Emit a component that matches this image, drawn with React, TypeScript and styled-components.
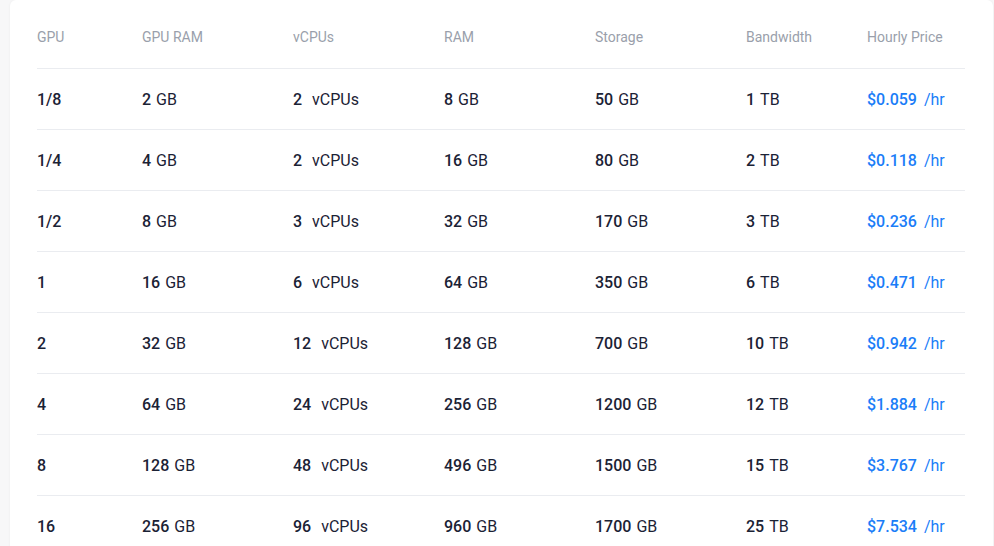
import React from 'react';
import styled, { createGlobalStyle } from 'styled-components';

type Plan = {
  gpu: string;
  gpuRam: number;
  vcpus: number;
  ram: number;
  storage: number;
  bandwidth: number;
  price: string;
};

const plans: Plan[] = [
  { gpu: '1/8', gpuRam: 2, vcpus: 2, ram: 8, storage: 50, bandwidth: 1, price: '0.059' },
  { gpu: '1/4', gpuRam: 4, vcpus: 2, ram: 16, storage: 80, bandwidth: 2, price: '0.118' },
  { gpu: '1/2', gpuRam: 8, vcpus: 3, ram: 32, storage: 170, bandwidth: 3, price: '0.236' },
  { gpu: '1', gpuRam: 16, vcpus: 6, ram: 64, storage: 350, bandwidth: 6, price: '0.471' },
  { gpu: '2', gpuRam: 32, vcpus: 12, ram: 128, storage: 700, bandwidth: 10, price: '0.942' },
  { gpu: '4', gpuRam: 64, vcpus: 24, ram: 256, storage: 1200, bandwidth: 12, price: '1.884' },
  { gpu: '8', gpuRam: 128, vcpus: 48, ram: 496, storage: 1500, bandwidth: 15, price: '3.767' },
  { gpu: '16', gpuRam: 256, vcpus: 96, ram: 960, storage: 1700, bandwidth: 25, price: '7.534' },
];

const headers = ['GPU', 'GPU RAM', 'vCPUs', 'RAM', 'Storage', 'Bandwidth', 'Hourly Price'];

const GlobalStyle = createGlobalStyle`
  html, body {
    margin: 0;
    padding: 0;
    background: #f7f7f8;
    font-family: Roboto, 'Liberation Sans', Arial, sans-serif;
    -webkit-font-smoothing: antialiased;
  }
`;

const Page = styled.div`
  padding: 0 1px 0 10px;
  height: 546px;
  overflow: hidden;
`;

const Card = styled.div`
  background: #ffffff;
  border-radius: 6px 6px 0 0;
  box-shadow: 0 0 3px rgba(0, 0, 0, 0.05);
  padding: 0 28px 0 27px;
  min-height: 546px;
`;

const Row = styled.div<{ $head?: boolean }>`
  display: grid;
  grid-template-columns: 105px 151px 151px 151px 151px 121px 1fr;
  align-items: center;
  height: ${(p) => (p.$head ? '69px' : '61px')};
  padding-top: ${(p) => (p.$head ? '6px' : '2px')};
  box-sizing: border-box;
  border-bottom: 1px solid #eaecf0;
`;

const HeadCell = styled.div`
  font-size: 14px;
  line-height: 16px;
  color: #9a9fab;
  white-space: nowrap;
`;

const Cell = styled.div<{ $accent?: boolean }>`
  font-size: 16px;
  line-height: 18px;
  color: ${(p) => (p.$accent ? '#1a7df8' : '#1b2235')};
  white-space: nowrap;
`;

const Num = styled.span<{ $gap?: number }>`
  font-weight: 500;
  margin-right: ${(p) => p.$gap ?? 5}px;
`;

const Unit = styled.span`
  font-weight: 400;
`;

const App: React.FC = () => (
  <>
    <GlobalStyle />
    <Page>
      <Card>
        <Row $head>
          {headers.map((h) => (
            <HeadCell key={h}>{h}</HeadCell>
          ))}
        </Row>
        {plans.map((p) => (
          <Row key={p.gpu}>
            <Cell><Num>{p.gpu}</Num></Cell>
            <Cell><Num>{p.gpuRam}</Num><Unit>GB</Unit></Cell>
            <Cell><Num $gap={10}>{p.vcpus}</Num><Unit>vCPUs</Unit></Cell>
            <Cell><Num>{p.ram}</Num><Unit>GB</Unit></Cell>
            <Cell><Num>{p.storage}</Num><Unit>GB</Unit></Cell>
            <Cell><Num>{p.bandwidth}</Num><Unit>TB</Unit></Cell>
            <Cell $accent><Num $gap={7}>${p.price}</Num><Unit>/hr</Unit></Cell>
          </Row>
        ))}
      </Card>
    </Page>
  </>
);

export default App;
